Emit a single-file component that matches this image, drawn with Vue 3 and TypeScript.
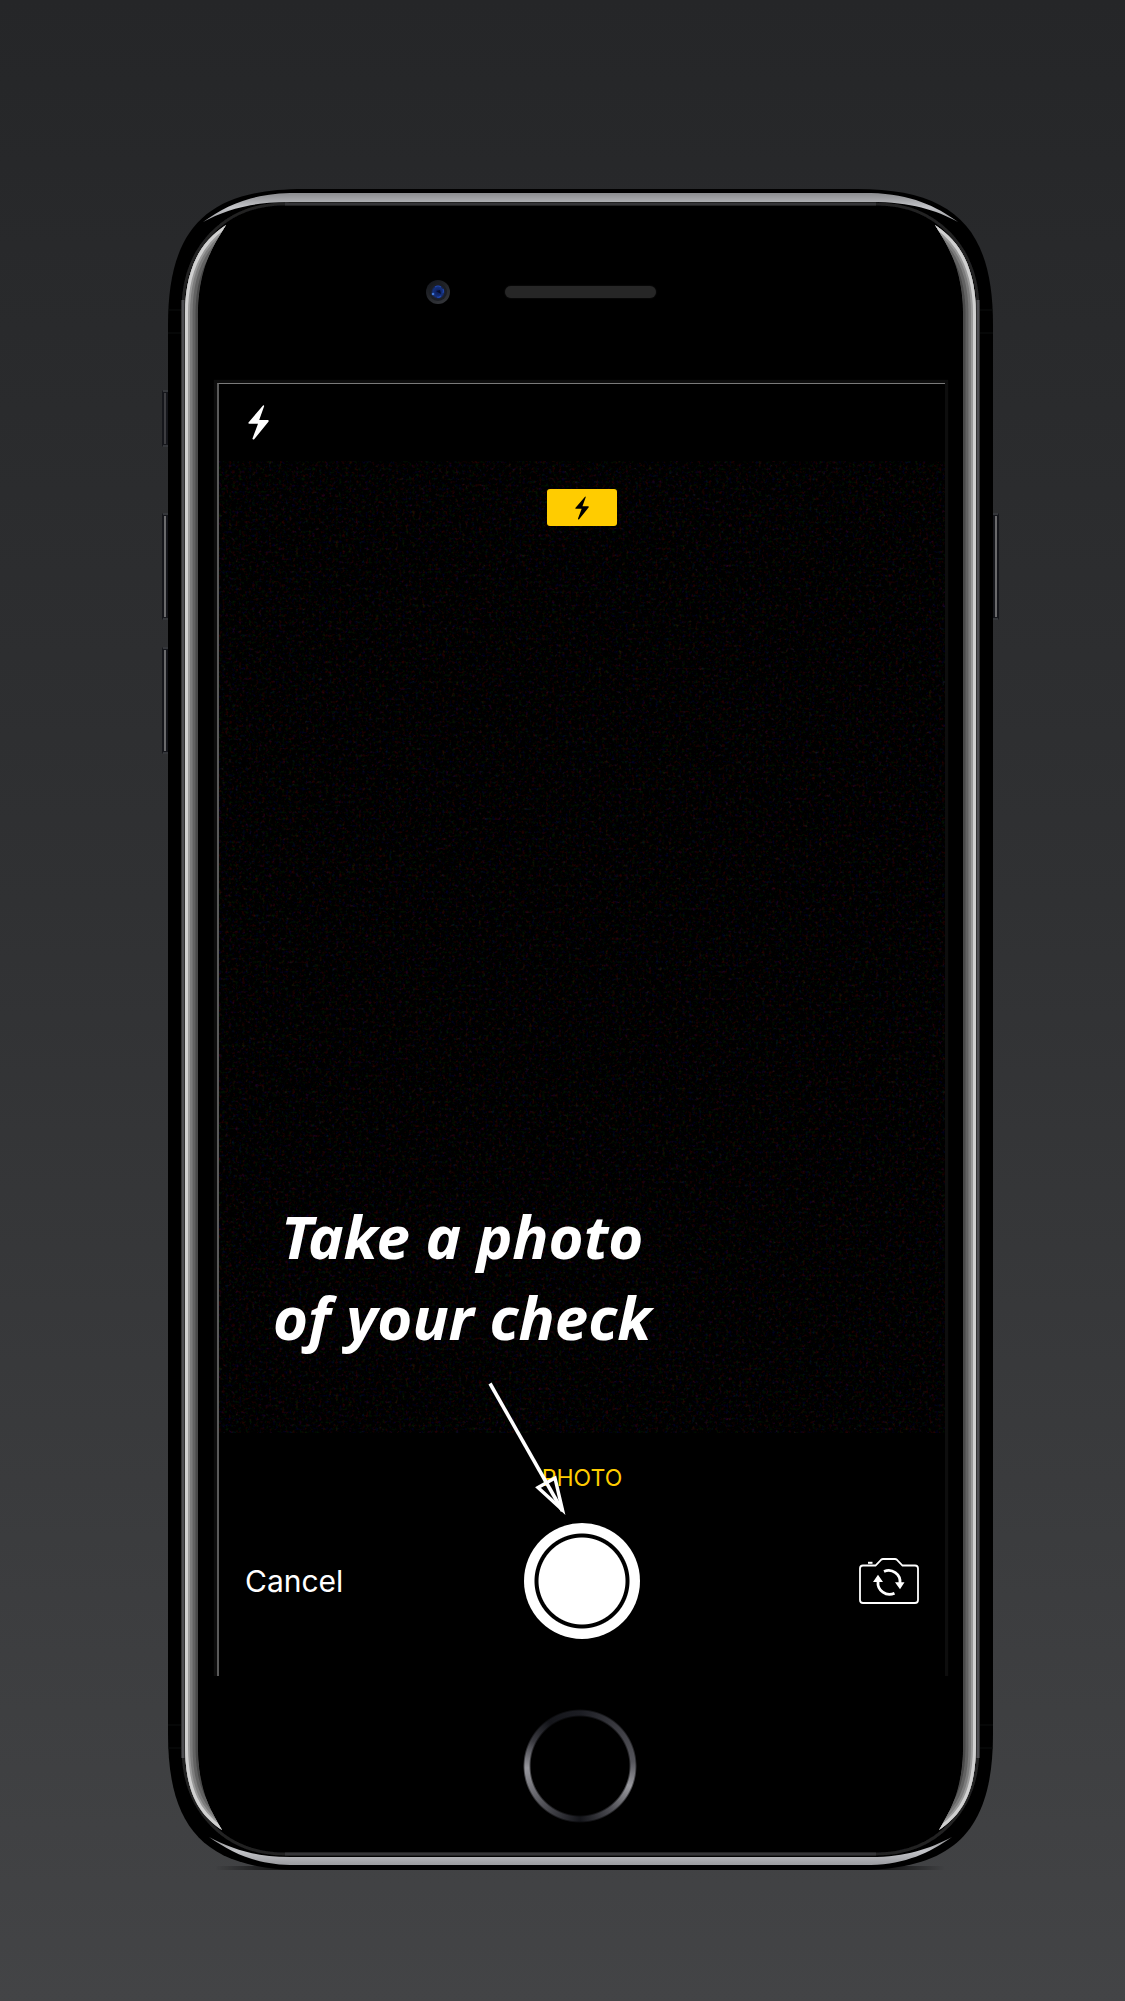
<script setup lang="ts">
import { ref } from 'vue'

const flashOn = ref<boolean>(true)
const captionLines: string[] = ['Take a photo', 'of your check']

// Outer edge of the polished left rim, shared by its clip and its highlight bands
const rimEdge = 'M226 225C201 241 185 268 185 314V1745C185 1791 198 1814 222 1830'
const rimShape = rimEdge + 'C206 1803 198 1785 198 1740V320C198 275 207 255 226 225Z'
const rimBands: { color: string; width: number }[] = [
  { color: '#484848', width: 26 },
  { color: '#626262', width: 21 },
  { color: '#7c7c7c', width: 15 },
  { color: '#9a9a9a', width: 10 },
  { color: '#d0d0d0', width: 6 },
]
const buttonsLeft: { y: number; h: number; shade: string }[] = [
  { y: 390, h: 57, shade: '#3c3c40' },
  { y: 513, h: 107, shade: '#6a6a6c' },
  { y: 647, h: 107, shade: '#6a6a6c' },
]
</script>

<template>
  <main class="page">
    <section class="device">
      <svg class="frame" viewBox="167 189 826 1682" preserveAspectRatio="none" aria-hidden="true">
        <defs>
          <clipPath id="rim-clip"><path :d="rimShape" /></clipPath>
          <linearGradient id="edge" x1="0" y1="0" x2="0" y2="1">
            <stop offset="0" stop-color="#8a8b8e" />
            <stop offset="0.5" stop-color="#c3c4c8" />
            <stop offset="1" stop-color="#9a9b9f" />
          </linearGradient>
          <linearGradient id="ground" x1="0" x2="1">
            <stop offset="0" stop-color="#000" stop-opacity="0" />
            <stop offset="0.12" stop-color="#000" />
            <stop offset="0.88" stop-color="#000" />
            <stop offset="1" stop-color="#000" stop-opacity="0" />
          </linearGradient>
          <filter id="soft" x="-5%" y="-5%" width="110%" height="110%">
            <feGaussianBlur stdDeviation="0.7" />
          </filter>
          <g id="rim">
            <g clip-path="url(#rim-clip)">
              <path :d="rimShape" fill="#303030" />
              <path
                v-for="band in rimBands"
                :key="band.width"
                :d="rimEdge"
                fill="none"
                :stroke="band.color"
                :stroke-width="band.width"
              />
            </g>
          </g>
        </defs>
        <g v-for="b in buttonsLeft" :key="b.y">
          <rect x="162" :y="b.y" width="8" :height="b.h" rx="2" fill="#15161b" />
          <rect x="164" :y="b.y + 3" width="2" :height="b.h - 6" :fill="b.shade" />
          <path :d="`M163 ${b.y + 1}H168M163 ${b.y + b.h - 1}H168`" stroke="#55565a" />
        </g>
        <rect x="991" y="513" width="8" height="107" rx="2" fill="#15161b" />
        <rect x="995" y="516" width="2" height="101" fill="#6a6a6c" />
        <path d="M993 514H998M993 619H998" stroke="#55565a" />
        <rect x="215" y="1866" width="730" height="4" fill="url(#ground)" filter="url(#soft)" />
        <path
          d="M168 325C168 228 207 189 304 189H857C954 189 993 228 993 325V1734C993 1831 954 1870 857 1870H304C207 1870 168 1831 168 1734Z"
          fill="#000"
        />
        <path
          d="M168 310H181M168 333H181M980 310H993M980 333H993M168 1725H181M168 1748H181M980 1725H993M980 1748H993"
          stroke="#0d0f0f"
        />
        <g filter="url(#soft)">
          <path
            d="M285 204C225 204 183 247 183 310V1748C183 1811 225 1854 285 1854H876C936 1854 978 1811 978 1748V310C978 247 936 204 876 204Z"
            fill="none"
            stroke="#202021"
            stroke-width="3"
          />
          <path d="M285 204H876M285 1854H876" stroke="#363637" stroke-width="3" />
          <path d="M183 300V1758M978 300V1758" stroke="#505052" stroke-width="3" />
          <path
            d="M203 222C225 206 250 194 290 193H871C911 194 936 206 958 222C936 210 911 202 871 202H290C250 202 225 210 203 222Z"
            fill="url(#edge)"
          />
          <path
            d="M209 1837C232 1853 255 1864 290 1865H871C906 1864 929 1853 952 1837C929 1849 906 1857 871 1857H290C255 1857 232 1849 209 1837Z"
            fill="url(#edge)"
          />
          <use href="#rim" />
          <use href="#rim" transform="translate(1161 0) scale(-1 1)" />
        </g>
      </svg>

      <header class="forehead">
        <svg class="lens" viewBox="0 0 24 24" width="24" height="24" aria-hidden="true">
          <defs>
            <linearGradient id="lens-rim" x1="0.2" y1="0" x2="0.8" y2="1">
              <stop offset="0" stop-color="#14161b" />
              <stop offset="1" stop-color="#35373c" />
            </linearGradient>
            <radialGradient id="lens-glass">
              <stop offset="0" stop-color="#0c1c55" />
              <stop offset="0.7" stop-color="#14307c" />
              <stop offset="1" stop-color="#1a1d28" />
            </radialGradient>
          </defs>
          <circle cx="12" cy="12" r="12" fill="url(#lens-rim)" />
          <circle cx="12" cy="12" r="9" fill="#1c1e24" />
          <circle cx="12" cy="12" r="7" fill="url(#lens-glass)" />
          <circle cx="7" cy="14" r="1.3" fill="#3f78d8" />
          <path d="M9 7Q12 5 15 7M17 9Q18 11 17 13M11 17Q13 18 15 16" fill="none" stroke="#2046ae" stroke-width="1.2" />
          <path d="M10 11L14 10L15 14Z" fill="#070d28" />
        </svg>
        <span class="speaker"></span>
      </header>

      <div class="screen">
        <div class="topbar">
          <button class="plain" type="button" aria-label="Flash" @click="flashOn = !flashOn">
            <svg viewBox="0 0 21 35" width="21" height="35" aria-hidden="true">
              <path
                d="M15 .5L.5 17.5Q0 18.6 1.2 18.7H10L4.4 33.8Q5 35.2 6.2 34.2L20.6 16.5Q21 15 19.8 14.9H11.2L16.2 1Q16 0 15 .5Z"
                fill="#fff"
              />
            </svg>
          </button>
        </div>

        <div class="viewfinder">
          <svg class="grain" width="100%" height="100%" aria-hidden="true">
            <filter id="noise" x="0" y="0" width="100%" height="100%" color-interpolation-filters="sRGB">
              <feTurbulence type="fractalNoise" baseFrequency="0.3" numOctaves="2" seed="4" />
              <feColorMatrix values="0.5 0 0 0 -0.28  0 0.3 0 0 -0.17  0 0 0.5 0 -0.29  0 0 0 0 1" />
            </filter>
            <rect width="100%" height="100%" filter="url(#noise)" />
          </svg>
          <span v-show="flashOn" class="badge">
            <svg viewBox="0 0 21 35" width="14" height="24" aria-hidden="true">
              <path
                d="M15 .5L.5 17.5Q0 18.6 1.2 18.7H10L4.4 33.8Q5 35.2 6.2 34.2L20.6 16.5Q21 15 19.8 14.9H11.2L16.2 1Q16 0 15 .5Z"
                fill="#000"
              />
            </svg>
          </span>
          <p class="caption">
            <span v-for="line in captionLines" :key="line">{{ line }}</span>
            <svg class="arrow" viewBox="0 0 84 140" width="84" height="140" aria-hidden="true">
              <path d="M5 2.5L77.5 130" stroke="#fff" stroke-width="3.6" />
              <path d="M53 106.5L70 97L77.5 129Z" fill="none" stroke="#fff" stroke-width="3.4" />
            </svg>
          </p>
        </div>

        <div class="controls">
          <span class="mode">PHOTO</span>
          <div class="actions">
            <button class="plain cancel" type="button">Cancel</button>
            <button class="shutter" type="button" aria-label="Take photo"></button>
            <button class="plain switch" type="button" aria-label="Switch camera">
              <svg viewBox="0 0 60 46" width="60" height="46" fill="none" stroke="#fff" aria-hidden="true">
                <path
                  d="M4 7.5H16.5L22 1.8Q23 1 24 1H36Q37 1 38 1.8L43.5 7.5H56Q59 7.5 59 10.5V42Q59 45 56 45H4Q1 45 1 42V10.5Q1 7.5 4 7.5Z"
                  stroke-width="1.8"
                />
                <path d="M9 4.8H13.5" stroke-width="2" />
                <path d="M25 13.5A11.4 11.4 0 0 1 41 25M35.5 35.2A11.6 11.6 0 0 1 19 23.5" stroke-width="2.8" />
                <path d="M36 24.2H45.5L41 31.2ZM14 24H24L19 16.8Z" fill="#fff" stroke="none" />
              </svg>
            </button>
          </div>
        </div>
      </div>

      <footer class="chin">
        <button class="home" type="button" aria-label="Home"></button>
      </footer>
    </section>
  </main>
</template>

<style>
body {
  margin: 0;
  background: #434446;
}
</style>

<style scoped>
.page {
  box-sizing: border-box;
  min-height: 100vh;
  padding: 189px 132px 130px 167px;
  background: linear-gradient(#252628, #303133 45%, #434446);
  color: #fff;
  font-family: Inter, "Liberation Sans", sans-serif;
}

.device {
  position: relative;
  display: flex;
  flex-direction: column;
}

.frame {
  position: absolute;
  inset: 0;
  width: 100%;
  height: 100%;
  overflow: visible;
}

.forehead {
  position: relative;
  display: grid;
  grid-template-columns: 1fr auto 1fr;
  align-items: center;
  box-sizing: border-box;
  height: 194px;
  padding-top: 11px;
}

.lens {
  justify-self: end;
  margin-right: 55px;
}

.speaker {
  width: 151px;
  height: 12px;
  border-radius: 6px;
  background: #262626;
  box-shadow: 0 0 2px #1c1c1c;
}

.screen {
  position: relative;
  display: flex;
  flex-direction: column;
  margin: 0 48px 0 50px;
  border-top: 1px solid #7a7a7a;
  border-left: 2px solid #5a5a5a;
  background: #000;
  box-shadow: 0 0 1px 3px #0d0d0d;
  clip-path: inset(-5px -5px 0 -5px);
}

.plain {
  display: flex;
  padding: 0;
  border: 0;
  background: none;
  color: inherit;
  font: inherit;
  cursor: pointer;
}

.topbar {
  display: flex;
  align-items: center;
  height: 77px;
  padding: 0 29px;
}

.viewfinder {
  position: relative;
  z-index: 1;
  display: flex;
  flex-direction: column;
  justify-content: space-between;
  box-sizing: border-box;
  min-height: 972px;
  padding: 28px 0 75px;
}

.grain {
  position: absolute;
  inset: 0;
}

.badge {
  position: relative;
  display: flex;
  align-items: center;
  justify-content: center;
  align-self: center;
  width: 70px;
  height: 37px;
  border-radius: 3px;
  background: #fc0;
}

.caption {
  position: relative;
  display: flex;
  flex-direction: column;
  align-self: flex-start;
  align-items: center;
  margin: 0 0 0 54px;
  font: italic 700 60px/81px "Noto Sans", "Open Sans", sans-serif;
  white-space: nowrap;
}

.arrow {
  position: absolute;
  top: 185px;
  left: 212px;
}

.controls {
  display: flex;
  flex-direction: column;
  align-items: center;
  gap: 31px;
  padding: 31px 26px 37px;
}

.mode {
  color: #fc0;
  font-size: 23px;
  line-height: 28px;
}

.actions {
  display: grid;
  grid-template-columns: 1fr auto 1fr;
  align-items: center;
  width: 100%;
}

.cancel {
  justify-self: start;
  font-size: 30px;
  line-height: 40px;
}

.switch {
  justify-self: end;
}

.shutter {
  width: 116px;
  height: 116px;
  padding: 0;
  border: 0;
  border-radius: 50%;
  background: radial-gradient(circle, #fff 43px, #000 44px, #000 47px, #fff 48px);
  cursor: pointer;
}

.chin {
  position: relative;
  display: flex;
  justify-content: center;
  padding: 33px 0 48px;
}

.home {
  width: 114px;
  height: 114px;
  padding: 0;
  border: 0;
  border-radius: 50%;
  background:
    radial-gradient(circle, #000 49px, transparent 51px, transparent 55px, #000 57px),
    conic-gradient(#1c1d23, #3c3c42 45deg, #55555b 85deg, #9a9a9f 112deg, #4c4c52 145deg, #14151a 180deg, #4c4c52 220deg, #98989e 268deg, #3a3a40 298deg, #14151a 325deg, #1c1d23);
  cursor: pointer;
}
</style>
